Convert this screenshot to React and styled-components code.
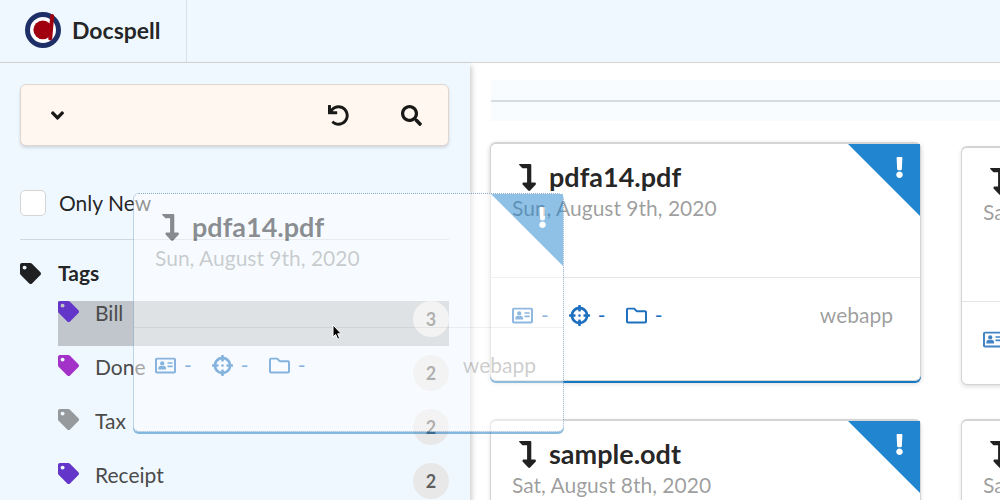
import React from 'react';
import styled, { createGlobalStyle, css } from 'styled-components';
import {
  FaAngleDown,
  FaUndo,
  FaSearch,
  FaTag,
  FaLevelDownAlt,
  FaExclamation,
  FaCrosshairs,
  FaRegFolder,
} from 'react-icons/fa';

const GlobalStyle = createGlobalStyle`
  *, *::before, *::after { box-sizing: border-box; }
  body {
    margin: 0;
    background: #fff;
    color: rgba(0, 0, 0, 0.87);
    font-family: Lato, "Liberation Sans", sans-serif;
    font-size: 21px;
    line-height: 30px;
  }
  svg { display: block; flex: none; }
`;

const Page = styled.div`
  position: relative;
  display: flex;
  flex-direction: column;
  height: 100vh;
  overflow: hidden;
`;

const TopBar = styled.header`
  flex: none;
  display: flex;
  height: 63px;
  background: aliceblue;
  border-bottom: 1px solid #d4d4d5;
`;

const Brand = styled.a`
  display: flex;
  align-items: center;
  gap: 11px;
  padding: 0 25px 2px;
  border-right: 1px solid #d9e0e6;
  color: inherit;
  font-size: 23px;
  font-weight: 700;
  text-decoration: none;
`;

const Columns = styled.div`
  flex: 1;
  display: flex;
  min-height: 0;
`;

const Sidebar = styled.aside`
  flex: 0 0 470px;
  padding: 21px 21px 0 20px;
  background: aliceblue;
  box-shadow: 2px 3px 5px rgba(34, 36, 38, 0.22);
  overflow: clip;
  overflow-clip-margin: 12px;
`;

const SearchMenu = styled.nav`
  display: flex;
  align-items: stretch;
  height: 62px;
  border: 1px solid #dfd6d0;
  border-radius: 6px;
  background: #fff7f0;
  box-shadow: 0 2px 3px rgba(34, 36, 38, 0.15);
`;

const MenuButton = styled.button`
  display: flex;
  align-items: center;
  justify-content: center;
  width: 73px;
  padding: 0;
  border: 0;
  background: none;
  color: rgba(0, 0, 0, 0.9);
  font: inherit;
  cursor: pointer;
  &:nth-child(2) { margin-left: auto; }
`;

const CheckRow = styled.label`
  display: flex;
  align-items: center;
  gap: 13px;
  margin-top: 42px;
`;

const CheckBox = styled.input`
  appearance: none;
  width: 26px;
  height: 26px;
  margin: 0;
  border: 1px solid #d4d4d5;
  border-radius: 5px;
  background: #fff;
`;

const Divider = styled.hr`
  height: 1px;
  margin: 21px 0 18px;
  border: 0;
  background: #d0d8df;
`;

const TagsTitle = styled.h2`
  display: flex;
  align-items: center;
  gap: 17px;
  margin: 0;
  font-size: 21px;
  font-weight: 700;
`;

const TagList = styled.ul`
  display: grid;
  gap: 9px;
  margin: 13px 0 0 38px;
  padding: 0;
  list-style: none;
`;

const TagItem = styled.li`
  display: flex;
  align-items: flex-start;
  gap: 16px;
  height: 45px;
  background: ${(p) => (p.$target ? 'rgba(0, 0, 0, 0.2)' : 'none')};
  svg { color: ${(p) => p.$color}; }
`;

const TagLink = styled.a`
  flex: 1;
  margin-top: -3px;
  color: #4b4b4b;
  text-decoration: none;
`;

const Count = styled.span`
  width: 36px;
  height: 36px;
  border-radius: 50%;
  background: #e8e8e8;
  color: rgba(0, 0, 0, 0.6);
  font-size: 18px;
  font-weight: 700;
  line-height: 36px;
  text-align: center;
`;

const Main = styled.main`
  flex: 1;
  min-width: 0;
  padding: 17px 0 0 20px;
  overflow: hidden;
`;

const Band = styled.div`
  display: flex;
  align-items: center;
  height: 41px;
  margin-left: 1px;
  background: #f8fcff;
  &::before {
    content: "";
    flex: 1;
    height: 2px;
    background: #d6dbe0;
  }
`;

const CardGrid = styled.div`
  display: grid;
  grid-template-columns: repeat(2, 431px);
  gap: 34px 40px;
  margin-top: 25px;
`;

const CardBox = styled.article`
  position: relative;
  width: 431px;
  height: 239px;
  border: 1px solid #d4d4d5;
  border-top-width: 2px;
  border-radius: 6px;
  background: #fff;
  box-shadow: 0 2px 4px rgba(0, 0, 0, 0.12);
  ${(p) => p.$lifted && css`
    transform: translateY(-4px);
    box-shadow: 0 2px 0 #1678c2, 0 2px 5px rgba(0, 0, 0, 0.2);
  `}
  ${(p) => p.$dragged && css`
    position: absolute;
    top: 193px;
    left: 133px;
    border: 1px dotted #1b5f9e;
    box-shadow: 0 2px 0 #1678c2;
    opacity: 0.5;
  `}
`;

const CardBody = styled.div`
  min-height: ${(p) => (p.$tall ? 153 : 133)}px;
  padding: 17px 21px 0;
`;

const CardTitle = styled.h3`
  display: flex;
  align-items: center;
  gap: 13px;
  margin: 0;
  padding-left: 7px;
  font-size: 27px;
  font-weight: 700;
  line-height: 32px;
  svg { width: 17px; height: 27px; }
`;

const CardDate = styled.div`
  color: rgba(0, 0, 0, 0.4);
`;

const Corner = styled.div`
  position: absolute;
  top: 0;
  right: 0;
  display: flex;
  justify-content: flex-end;
  width: 72px;
  height: 72px;
  padding: 13px 10px;
  background: #2185d0;
  clip-path: polygon(0 0, 100% 0, 100% 100%);
  color: #fff;
`;

const CardMeta = styled.div`
  display: flex;
  align-items: center;
  padding: 22px 27px 0 21px;
  border-top: 1px solid #e4e4e5;
  color: rgba(0, 0, 0, 0.4);
`;

const MetaLink = styled.a`
  display: flex;
  align-items: center;
  gap: 8px;
  margin-right: 20px;
  color: ${(p) => (p.$active ? '#1e70bf' : '#4183c4')};
  text-decoration: none;
`;

const Source = styled.span`
  margin-left: auto;
`;

const Pointer = styled.svg`
  position: absolute;
  top: 324px;
  left: 332px;
`;

function Logo() {
  return (
    <svg width="36" height="36" viewBox="0 0 36 36" aria-hidden="true">
      <circle cx="18" cy="18" r="15.5" fill="#fff" stroke="#1d2f66" strokeWidth="5" />
      <circle cx="17.8" cy="17.8" r="9.4" fill="#a1000f" />
      <path d="M27.2 4 L25.2 26.5" stroke="#a1000f" strokeWidth="4" strokeLinecap="round" />
    </svg>
  );
}

function AddressCard() {
  return (
    <svg width="21" height="21" viewBox="0 0 512 512" fill="currentColor" aria-hidden="true">
      <path
        fillRule="evenodd"
        d="M464 64H48C21.5 64 0 85.5 0 112v288c0 26.500 21.500 48 48 48h416c26.500 0 48-21.500 48-48V112c0-26.500-21.500-48-48-48zm0 336H48V112h416z"
      />
      <circle cx="176" cy="206" r="52" />
      <path d="M80 340c0-50 30-76 60-76 22 12 50 12 72 0 30 0 60 26 60 76 0 8-6 14-14 14H94c-8 0-14-6-14-14z" />
      <rect x="304" y="176" width="128" height="40" rx="8" />
      <rect x="304" y="256" width="128" height="40" rx="8" />
    </svg>
  );
}

function Card({ title, date, isNew, active, tall, lifted, dragged }) {
  return (
    <CardBox $lifted={lifted} $dragged={dragged}>
      {isNew && (
        <Corner>
          <FaExclamation size={21} />
        </Corner>
      )}
      <CardBody $tall={tall}>
        <CardTitle>
          <FaLevelDownAlt />
          {title}
        </CardTitle>
        <CardDate>{date}</CardDate>
      </CardBody>
      <CardMeta>
        <MetaLink href="#correspondent" $active={active}>
          <AddressCard />-
        </MetaLink>
        <MetaLink href="#concerning" $active={active}>
          <FaCrosshairs size={21} />-
        </MetaLink>
        <MetaLink href="#folder" $active={active}>
          <FaRegFolder size={21} />-
        </MetaLink>
        <Source>webapp</Source>
      </CardMeta>
    </CardBox>
  );
}

const tags = [
  { name: 'Bill', count: 3, color: '#6435c9', target: true },
  { name: 'Done', count: 2, color: '#a333c8' },
  { name: 'Tax', count: 2, color: '#969a9d' },
  { name: 'Receipt', count: 2, color: '#6435c9' },
];

export default function App() {
  return (
    <Page>
      <GlobalStyle />
      <TopBar>
        <Brand href="#home">
          <Logo />
          Docspell
        </Brand>
      </TopBar>
      <Columns>
        <Sidebar>
          <SearchMenu>
            <MenuButton aria-label="Toggle search menu"><FaAngleDown size={21} /></MenuButton>
            <MenuButton aria-label="Reset search"><FaUndo size={21} /></MenuButton>
            <MenuButton aria-label="Search"><FaSearch size={21} /></MenuButton>
          </SearchMenu>
          <CheckRow>
            <CheckBox type="checkbox" />
            Only New
          </CheckRow>
          <Divider />
          <TagsTitle><FaTag size={21} />Tags</TagsTitle>
          <TagList>
            {tags.map((t) => (
              <TagItem key={t.name} $color={t.color} $target={t.target}>
                <FaTag size={21} />
                <TagLink href="#tag">{t.name}</TagLink>
                <Count>{t.count}</Count>
              </TagItem>
            ))}
          </TagList>
        </Sidebar>
        <Main>
          <Band />
          <CardGrid>
            <Card title="pdfa14.pdf" date="Sun, August 9th, 2020" isNew active lifted />
            <Card title="sample.pdf" date="Sat, August 8th, 2020" tall />
            <Card title="sample.odt" date="Sat, August 8th, 2020" isNew />
            <Card title="sample.docx" date="Sat, August 8th, 2020" />
          </CardGrid>
        </Main>
      </Columns>
      <Card title="pdfa14.pdf" date="Sun, August 9th, 2020" isNew active dragged />
      <Pointer width="10" height="17" viewBox="0 0 10 17" aria-hidden="true">
        <path
          d="M1 1v12l2.700-2.500 2 4.700 2-.8-2-4.600H9.300z"
          fill="#000"
          stroke="#fff"
          strokeWidth="1"
        />
      </Pointer>
    </Page>
  );
}
